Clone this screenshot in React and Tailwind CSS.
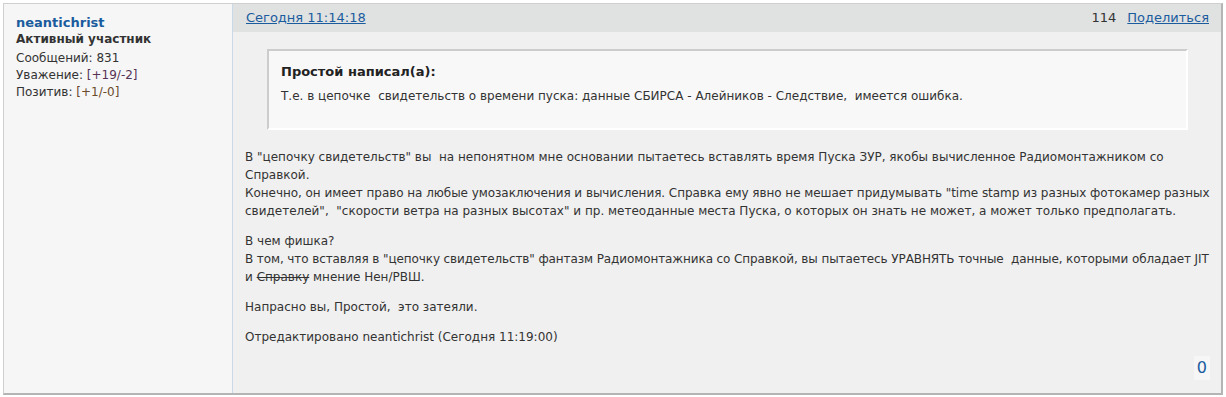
import React from 'react';

const font = "font-['Verdana','DejaVu_Sans',sans-serif]";

const App = () => {
  return (
    <div className={`pt-[3px] pl-[3px] ${font} text-[12px] text-[#333]`}>
      <div className="w-[1220px] h-[392px] flex border-t border-l border-[#cfcfcf] border-r-2 border-b-2 border-r-[#b4b4b4] border-b-[#b4b4b4]">
        {/* Author column */}
        <div className="w-[229px] shrink-0 bg-[#f6f6f6] border-r border-[#c9d9e8] pl-[12px] pt-[11px]">
          <div className="text-[13px] font-bold text-[#1a5c9e] leading-[16px]">neantichrist</div>
          <div className="font-bold text-[#333] leading-[16px]">Активный участник</div>
          <div className="mt-[3px] leading-[17px]">
            <div>Сообщений: 831</div>
            <div>Уважение: <span className="text-[#553355]">[+19/-2]</span></div>
            <div>Позитив: <span className="text-[#6b4a2a]">[+1/-0]</span></div>
          </div>
        </div>

        {/* Post */}
        <div className="flex-1 min-w-0 flex flex-col bg-[#f0f0f0]">
          <div className="h-[28px] shrink-0 bg-[#e0e1e1] flex items-center justify-between pl-[13px] pr-[12px] text-[13px]">
            <a href="#" className="text-[#1a5c9e] underline">Сегодня 11:14:18</a>
            <div className="flex items-center gap-[11px]">
              <span className="text-[#333]">114</span>
              <a href="#" className="text-[#1a5c9e] underline">Поделиться</a>
            </div>
          </div>

          <div className="flex-1 flex flex-col">
            <div className="shrink-0 mt-[17px] ml-[34px] mr-[33px] h-[81px] bg-[#f8f8f8] border-l-2 border-t-2 border-[#cccccc] border-r-2 border-b-2 border-r-white border-b-white pl-[12px] pt-[13px]">
              <div className="font-bold text-[13px] leading-[16px] text-[#222]">Простой написал(а):</div>
              <div className="mt-[8px] leading-[16px]">
                Т.е. в цепочке&nbsp; свидетельств о времени пуска: данные СБИРСА - Алейников - Следствие,&nbsp; имеется ошибка.
              </div>
            </div>

            <div className="shrink-0 pl-[12px] pt-[18px] leading-[18px] whitespace-nowrap">
              <p>
                В "цепочку свидетельств" вы&nbsp; на непонятном мне основании пытаетесь вставлять время Пуска ЗУР, якобы вычисленное Радиомонтажником со
                <br />
                Справкой.
                <br />
                <span className="tracking-[-0.05px]">
                  Конечно, он имеет право на любые умозаключения и вычисления. Справка ему явно не мешает придумывать "time stamp из разных фотокамер разных
                </span>
                <br />
                свидетелей",&nbsp; "скорости ветра на разных высотах" и пр. метеоданные места Пуска, о которых он знать не может, а может только предполагать.
              </p>
              <p className="mt-[12px]">
                В чем фишка?
                <br />
                <span className="tracking-[-0.1px]">
                  В том, что вставляя в "цепочку свидетельств" фантазм Радиомонтажника со Справкой, вы пытаетесь УРАВНЯТЬ точные&nbsp; данные, которыми обладает JIT
                </span>
                <br />
                и <s>Справку</s> мнение Нен/РВШ.
              </p>
              <p className="mt-[12px]">Напрасно вы, Простой,&nbsp; это затеяли.</p>
              <p className="mt-[12px]">Отредактировано neantichrist (Сегодня 11:19:00)</p>
            </div>

            <div className="mt-auto flex justify-end pr-[11px] pb-[13px]">
              <span className="bg-[#f6f6f6] text-[#1a5c9e] text-[16px] leading-[24px] px-[3px]">0</span>
            </div>
          </div>
        </div>
      </div>
    </div>
  );
};

export default App;
